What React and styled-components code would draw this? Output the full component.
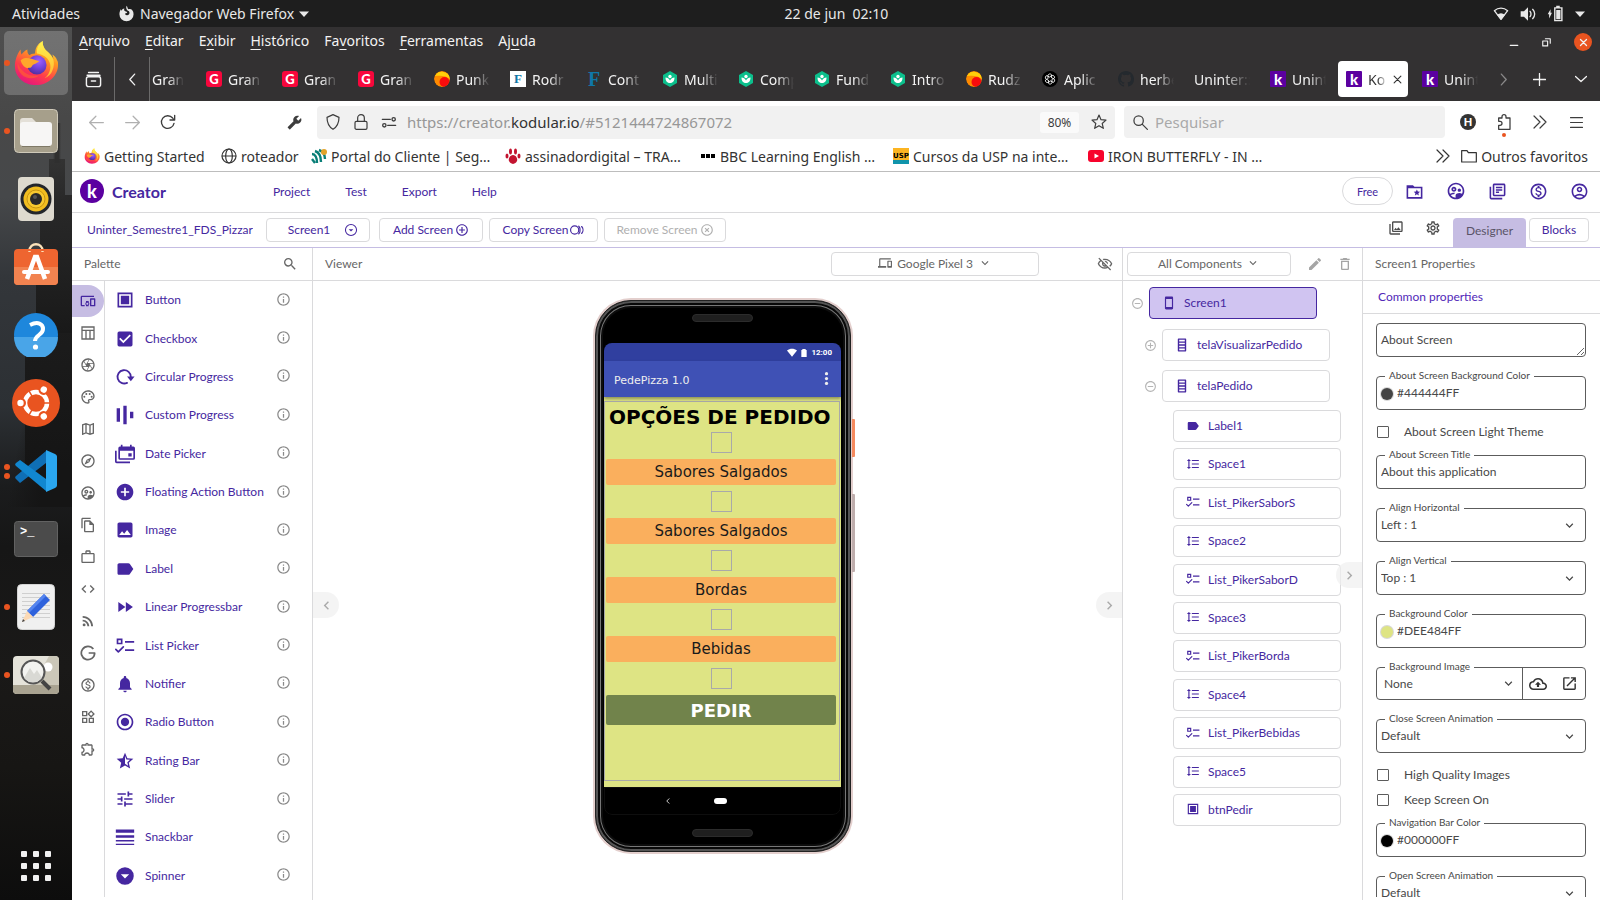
import React from "react";
import styled, { createGlobalStyle } from "styled-components";
import {
  MdAddCircle, MdCheckBox, MdCode, MdDeleteOutline, MdEdit, MdFastForward,
  MdFormatLineSpacing, MdImage, MdInfoOutline, MdLabel, MdNotifications, MdOpenInNew,
  MdOutlineAccountCircle, MdOutlineAddCircleOutline, MdOutlineCamera, MdOutlineCloudUpload,
  MdOutlineDevices, MdOutlineDevicesOther, MdOutlineExplore, MdOutlineExtension,
  MdOutlineFileCopy, MdOutlineLibraryBooks, MdOutlineMap, MdOutlineMonetizationOn,
  MdOutlinePalette, MdOutlineSettings, MdOutlineSupervisedUserCircle, MdOutlineVisibilityOff,
  MdOutlineWidgets, MdOutlinePhotoLibrary, MdRadioButtonChecked, MdRemoveCircleOutline,
  MdRssFeed, MdSearch, MdStarHalf, MdStayCurrentPortrait, MdTune, MdWorkOutline,
  MdExpandMore, MdChevronLeft, MdChevronRight, MdBuild, MdHighlightOff,
} from "react-icons/md";

const ui = `"Noto Sans", "Open Sans", sans-serif`;
const geo = `Lato, "Open Sans", sans-serif`;
const purple = "#4527a0";
const line = "#dadadc";

const Global = createGlobalStyle`
  *, *::before, *::after { box-sizing: border-box; }
  html, body, #root { height: 100%; }
  body { margin: 0; overflow: hidden; background: #fff; font-family: ${ui}; font-size: 14px; }
  button, input, select, textarea { font: inherit; color: inherit; margin: 0; }
  button { background: none; border: 0; padding: 0; cursor: pointer; }
  a { color: inherit; text-decoration: none; }
  svg { display: block; flex: none; }
  ul { list-style: none; margin: 0; padding: 0; }
`;

/* ---------- generic drawing helper ---------- */
const Icon = ({ size = 16, box = 24, children, stroke, w = 2, ...rest }) => (
  <svg
    width={size} height={size} viewBox={`0 0 ${box} ${box}`} aria-hidden="true"
    fill={stroke ? "none" : "currentColor"} stroke={stroke ? "currentColor" : "none"}
    strokeWidth={stroke ? w : undefined} strokeLinecap="round" strokeLinejoin="round" {...rest}
  >
    {children}
  </svg>
);

/* ---------- desktop shell ---------- */
const Desktop = styled.div`
  height: 100%;
  display: flex;
  flex-direction: column;
`;
const TopBar = styled.header`
  height: 27px;
  flex: none;
  display: grid;
  grid-template-columns: 1fr auto 1fr;
  align-items: center;
  padding: 0 15px 0 12px;
  background: #1e1e1e;
  color: #e8e8e8;
`;
const TopGroup = styled.div`
  display: flex;
  align-items: center;
  gap: ${(p) => p.$gap}px;
  justify-content: ${(p) => (p.$end ? "flex-end" : "flex-start")};
`;
const TopButton = styled.button`
  display: flex;
  align-items: center;
  gap: 5px;
  line-height: 27px;
`;
const Clock = styled.time`
  white-space: pre;
  padding-left: 76px;
`;
const Workspace = styled.div`
  flex: 1;
  min-height: 0;
  display: flex;
`;

const Dock = styled.nav`
  width: 72px;
  flex: none;
  display: flex;
  flex-direction: column;
  justify-content: space-between;
  padding: 2px 0 0;
  background:
    linear-gradient(90deg, transparent, #2f2f2f 30%, #2f2f2f 70%, transparent) 53px 96px / 8px 40px no-repeat,
    linear-gradient(#333, #292929) 49px 132px / 16px 40px no-repeat,
    linear-gradient(#292929, #232323) 40px 168px / 32px 60px no-repeat,
    linear-gradient(#232323, #191919) 36px 226px / 36px 80px no-repeat,
    linear-gradient(#1c1c1c, #151515) 25px 300px / 47px 140px no-repeat,
    linear-gradient(100deg, transparent 30%, #151515 65%) 0 360px / 72px 120px no-repeat,
    linear-gradient(180deg, #4f4f4f 0, #484848 90px, #46484a 170px, #33363a 250px, #2c3034 380px, #1b1c1d 460px, #161616 520px, #1a1918 640px, #171614 740px, #0d0d0d 100%);
`;
const DockItem = styled.button`
  position: relative;
  width: 72px;
  height: 68px;
  display: flex;
  align-items: center;
  justify-content: center;
  &::before {
    content: "";
    position: absolute;
    inset: 2px 4px;
    border-radius: 5px;
    background: ${(p) => (p.$active ? "rgba(255,255,255,.2)" : "none")};
  }
  svg { position: relative; }
`;
const Dots = styled.span`
  position: absolute;
  left: 4px;
  top: 0;
  bottom: 0;
  display: flex;
  flex-direction: column;
  justify-content: center;
  gap: 3px;
  i { width: 6px; height: 6px; border-radius: 50%; background: #e95420; }
`;
const AppsGrid = styled.button`
  width: 72px;
  height: 68px;
  display: grid;
  grid-template-columns: repeat(3, 6px);
  grid-auto-rows: 6px;
  gap: 6px;
  place-content: center;
  i { background: #f1f1f1; border-radius: 1px; }
`;

const FirefoxArt = ({ size, id }) => (
  <svg width={size} height={size} viewBox="0 0 48 48" aria-hidden="true">
    <defs>
      <linearGradient id={`${id}a`} x1="0.8" y1="0" x2="0.3" y2="1">
        <stop offset="0" stopColor="#fff44f" /><stop offset=".35" stopColor="#ff9a1f" />
        <stop offset=".7" stopColor="#ff3b4c" /><stop offset="1" stopColor="#e3167e" />
      </linearGradient>
      <radialGradient id={`${id}b`} cx=".6" cy=".3" r=".8">
        <stop offset="0" stopColor="#a060ff" /><stop offset=".5" stopColor="#7040d8" /><stop offset="1" stopColor="#4b2b8f" />
      </radialGradient>
      <linearGradient id={`${id}c`} x1="0" y1="0" x2="0" y2="1">
        <stop offset="0" stopColor="#fff44f" /><stop offset="1" stopColor="#ffb52e" />
      </linearGradient>
    </defs>
    <path fill={`url(#${id}a)`} d="M46 21c-1-3-3-5-5-6 1 2 1 4 1 5C40 14 34 12 32 7c-1-2-1-4-1-6-6 3-8 9-8 13-3 0-5 1-6 2-2-2-2-4-2-6-3 1-5 4-6 5-1-1-1-4-1-5-3 3-6 11-6 17 0 12 10 20 22 20 13 0 23-10 23-21 0-2 0-4-1-5z" />
    <path fill={`url(#${id}c)`} d="M31 1c0 2 0 4 1 6 2 5 8 7 10 13 1 3 1 8-1 12-1 3-4 6-8 8 6-5 8-13 4-19-3-5-8-6-12-7-1-5 2-10 6-13z" />
    <circle cx="25" cy="26" r="10" fill={`url(#${id}b)`} />
    <path fill="#ffa62b" d="M8 21c4-4 11-2 16 0l3 1c0 2-6 3-7 5-1 1-1 2-3 2-4 1-8-3-9-8z" />
    <path fill="#ff5a36" d="M5 24c3 9 12 15 22 13-4 4-13 4-18-1-3-3-5-8-4-12z" opacity=".75" />
  </svg>
);
const FilesArt = () => (
  <svg width="44" height="44" viewBox="0 0 44 44">
    <rect x=".5" y=".5" width="43" height="43" rx="4" fill="#a69f8b" stroke="#cfc9b9" />
    <path fill="#e4e0d8" d="M6 12a3 3 0 0 1 3-3h9l4 4h10v8H6z" />
    <rect x="6" y="13" width="32" height="24" rx="3" fill="#f7f6f5" />
    <path stroke="#7f7966" d="M8 37.500h28" />
  </svg>
);
const SpeakerArt = () => (
  <svg width="36" height="44" viewBox="0 0 36 44">
    <rect width="36" height="44" rx="4" fill="#dedacf" />
    <circle cx="18" cy="22" r="15.500" fill="#23262b" />
    <circle cx="18" cy="22" r="12.500" fill="#f1bd1f" />
    <circle cx="18" cy="22" r="9" fill="#f7c92f" stroke="#c79512" />
    <circle cx="18" cy="22" r="6" fill="#2a2a2a" /><circle cx="17" cy="20" r="2" fill="#555" />
  </svg>
);
const SoftwareArt = () => (
  <svg width="44" height="48" viewBox="0 0 44 48">
    <path fill="none" stroke="#fbe3bb" strokeWidth="2.400" d="M15.500 8c0-9 13-9 13 0" />
    <rect y="6" width="44" height="36" rx="4" fill="#ee6530" />
    <path fill="#f28350" d="M0 24h44v14a4 4 0 0 1-4 4H4a4 4 0 0 1-4-4z" />
    <path fill="none" stroke="#fbe3bb" strokeWidth="2.400" d="M15.500 8v1M28.500 8v1" />
    <path fill="none" stroke="#fff" strokeWidth="4.500" d="M13 36l8-22h2l8 22" />
    <path stroke="#fff" strokeWidth="4" strokeLinecap="round" d="M10 29h24" />
  </svg>
);
const HelpArt = () => (
  <svg width="44" height="44" viewBox="0 0 44 44">
    <circle cx="22" cy="22" r="22" fill="#1e87dc" />
    <path d="M0 24h44a22 22 0 0 1-44 0z" fill="#49a5e8" />
    <path fill="none" stroke="#fff" strokeWidth="4" d="M16 12c8-4 13-1 13 4 0 6-8 6-8 12" />
    <circle cx="21.500" cy="34" r="2.600" fill="#fff" />
  </svg>
);
const UbuntuArt = () => (
  <svg width="48" height="48" viewBox="0 0 48 48">
    <circle cx="24" cy="24" r="24" fill="#e95420" />
    <circle cx="24" cy="24" r="11" fill="none" stroke="#fff" strokeWidth="4.500" />
    {[180, 60, 300].map((a) => (
      <g key={a} transform={`rotate(${a} 24 24)`}>
        <circle cx="39" cy="24" r="5" fill="#e95420" /><circle cx="39.500" cy="24" r="3.200" fill="#fff" />
      </g>
    ))}
    {[0, 120, 240].map((a) => (
      <path key={a} transform={`rotate(${a} 24 24)`} stroke="#e95420" strokeWidth="1.500" d="M32 24h6" />
    ))}
  </svg>
);
const CodeArt = () => (
  <svg width="42" height="42" viewBox="0 0 42 42">
    <path fill="#0f6fb5" d="M31 1v12L5 33l-4-4a2 2 0 0 1 0-3z" />
    <path fill="#1187d0" d="M31 41V29L5 10l-4 3a2 2 0 0 0 0 3z" />
    <path fill="#2aa7f0" d="M31 0l9 4a3 3 0 0 1 2 3v28a3 3 0 0 1-2 3l-9 4z" />
  </svg>
);
const TerminalArt = () => (
  <svg width="44" height="36" viewBox="0 0 44 36">
    <rect x=".5" y=".5" width="43" height="35" rx="3" fill="#4b4b4b" stroke="#626262" />
    <text x="6" y="14" fill="#fff" fontFamily="Liberation Mono, monospace" fontWeight="700" fontSize="12">&gt;_</text>
  </svg>
);
const EditorArt = () => (
  <svg width="38" height="46" viewBox="0 0 38 46">
    <rect x=".5" y=".5" width="37" height="45" rx="4" fill="#f0f0f0" stroke="#d4d4d4" />
    <path stroke="#cfcfcf" d="M5 9.500h28M5 13.500h28M5 17.500h28M5 21.500h28M5 25.500h28M5 29.500h28M5 33.500h28" />
    <path fill="#2f62dc" d="M27 10l6 6-17 17-6-6z" /><path fill="#5585f0" d="M27 10l2 2-17 17-2-2z" />
    <path fill="#fbd9b5" d="M10 27l6 6-11 5z" /><path fill="#444" d="M6 35l2 2-3 1z" />
  </svg>
);
const ViewerArt = () => (
  <svg width="46" height="38" viewBox="0 0 46 38">
    <rect width="46" height="38" rx="4" fill="#e5e3da" />
    <path fill="#cbc7b8" d="M20 29L36 0h6a4 4 0 0 1 4 4v25z" />
    <path fill="#a9a391" d="M0 29h46v5a4 4 0 0 1-4 4H4a4 4 0 0 1-4-4z" />
    <circle cx="35" cy="11" r="4.500" fill="#fff" />
    <path d="M29 25l8 8" stroke="#444" strokeWidth="4" />
    <circle cx="20" cy="16" r="11.500" fill="#f4f4f2" fillOpacity=".9" stroke="#555" strokeWidth="2" />
    <path fill="#d9d9d4" d="M11 22l6-10 4 6 3-4 5 8-5 4h-8z" />
  </svg>
);

/* ---------- browser ---------- */
const Browser = styled.main`
  flex: 1;
  min-width: 0;
  display: flex;
  flex-direction: column;
  background: #fff;
`;
const MenuBar = styled.nav`
  height: 30px;
  flex: none;
  display: flex;
  align-items: center;
  gap: 15px;
  padding: 0 8px 4px 7px;
  background: #333132;
  color: #f3f3f3;
  u { text-underline-offset: 3px; }
`;
const WindowButtons = styled.div`
  margin-left: auto;
  display: flex;
  align-items: center;
  gap: 23px;
  padding-top: 4px;
`;
const CloseWindow = styled.button`
  width: 18px;
  height: 18px;
  border-radius: 50%;
  background: #e95420;
  display: grid;
  place-items: center;
`;
const TabBar = styled.div`
  height: 44px;
  flex: none;
  display: flex;
  align-items: center;
  background: #333132;
  color: #f3f3f3;
`;
const TabTool = styled.button`
  width: ${(p) => p.$w}px;
  height: 44px;
  flex: none;
  display: grid;
  place-items: center;
  opacity: ${(p) => (p.$dim ? 0.45 : 1)};
  border-right: ${(p) => (p.$rule ? "1px solid #6b6a6a" : "0")};
`;
const Strip = styled.div`
  flex: 1;
  min-width: 0;
  display: flex;
  overflow: hidden;
`;
const Tab = styled.button`
  width: ${(p) => (p.$first ? 46 : 76)}px;
  height: 44px;
  flex: none;
  padding: 4px ${(p) => (p.$first ? 12 : 4)}px 4px ${(p) => (p.$first ? 0 : 2)}px;
  text-align: left;
  color: ${(p) => (p.$active ? "#333" : "inherit")};
`;
const TabBody = styled.span`
  height: 36px;
  display: flex;
  align-items: center;
  gap: 6px;
  padding: 0 ${(p) => (p.$first ? 0 : 6)}px;
  padding-left: ${(p) => (p.$first ? 2 : 8)}px;
  border-radius: 4px;
  background: ${(p) => (p.$active ? "#fff" : "none")};
`;
const TabText = styled.span`
  flex: 1;
  min-width: 0;
  overflow: hidden;
  white-space: nowrap;
  line-height: 20px;
  padding-top: 1px;
  mask-image: linear-gradient(90deg, #000 50%, transparent 100%);
`;
const Fav = styled.span`
  width: 16px;
  height: 16px;
  flex: none;
  display: grid;
  place-items: center;
  overflow: hidden;
  border-radius: ${(p) => p.$r || 0}px;
  background: ${(p) => p.$bg || "none"};
  color: ${(p) => p.$fg || "#fff"};
  font: ${(p) => p.$font || `900 13px/16px ${geo}`};
`;

const Toolbar = styled.div`
  height: 42px;
  flex: none;
  display: flex;
  align-items: center;
  padding-right: 6px;
  color: #3d3d3d;
`;
const Tool = styled.button`
  width: 36px;
  height: 36px;
  flex: none;
  display: grid;
  place-items: center;
  position: relative;
  opacity: ${(p) => (p.$dim ? 0.4 : 1)};
`;
const Nav = styled.div`
  display: flex;
  padding-left: 6px;
  width: 204px;
  flex: none;
`;
const Address = styled.div`
  flex: 782 1 0;
  height: 33px;
  margin-left: 5px;
  display: flex;
  align-items: center;
  gap: 12px;
  padding: 0 8px;
  background: #f1f1f1;
  border-radius: 4px;
`;
const Url = styled.a`
  flex: 1;
  margin-left: -2px;
  font-size: 15px;
  color: #979797;
  white-space: nowrap;
  b { font-weight: 400; color: #333; }
`;
const Zoom = styled.button`
  width: 39px;
  height: 21px;
  font-size: 12px;
  background: #fafafa;
  border-radius: 3px;
`;
const SearchBox = styled.label`
  flex: 304 1 0;
  height: 32px;
  margin: 0 5px 0 9px;
  display: flex;
  align-items: center;
  gap: 7px;
  padding: 0 8px 0 9px;
  background: #f1f1f1;
  border-radius: 4px;
  input { flex: 1; min-width: 0; border: 0; background: none; outline: 0; font-size: 15px; padding: 0; }
  input::placeholder { color: #a9a9a9; opacity: 1; }
`;
const Notice = styled.i`
  position: absolute;
  left: 16px;
  bottom: 3px;
  width: 4px;
  height: 4px;
  border-radius: 2px;
  background: #e95420;
`;
const Bookmarks = styled.nav`
  height: 29px;
  flex: none;
  display: flex;
  align-items: center;
  padding: 0 12px 2px;
  border-bottom: 1px solid #bdbdbd;
  color: #333;
`;
const Bookmark = styled.a`
  display: flex;
  align-items: center;
  gap: 4px;
  white-space: nowrap;
  width: ${(p) => (p.$w ? p.$w + "px" : "auto")};
`;
const More = styled.button`
  margin: 0 10px 0 auto;
`;

/* ---------- creator ---------- */
const Creator = styled.section`
  flex: 1;
  min-height: 0;
  display: flex;
  flex-direction: column;
  font-family: ${geo};
  font-size: 12px;
  color: #5f5f5f;
`;
const AppHeader = styled.header`
  height: 41px;
  flex: none;
  display: flex;
  align-items: center;
  padding: 0 11px 2px 8px;
  border-bottom: 1px solid ${line};
  color: ${purple};
`;
const Brand = styled.a`
  width: 193px;
  display: flex;
  align-items: center;
  gap: 8px;
  font-size: 16px;
  font-weight: 700;
`;
const Logo = styled.span`
  width: 24px;
  height: 24px;
  border-radius: 50%;
  background: #5b00a0;
  color: #fff;
  display: grid;
  place-items: center;
  font: 900 18px/22px ${geo};
`;
const AppMenu = styled.nav`
  display: flex;
  gap: 35px;
`;
const AppTools = styled.div`
  margin-left: auto;
  display: flex;
  align-items: center;
  gap: 22px;
`;
const Pill = styled.button`
  width: 51px;
  height: 28px;
  margin-right: -10px;
  border: 1px solid ${line};
  border-radius: 14px;
  font-size: 11px;
`;
const ScreenBar = styled.div`
  height: 35px;
  flex: none;
  display: flex;
  align-items: center;
  padding: 0 11px 0 15px;
  border-bottom: 1px solid #c5bde3;
  color: ${purple};
`;
const ProjectName = styled.a`
  width: 166px;
  margin-right: 13px;
  padding-bottom: 2px;
  overflow: hidden;
  white-space: nowrap;
`;
const OutlineButton = styled.button`
  width: ${(p) => p.$w}px;
  height: 24px;
  flex: none;
  display: flex;
  align-items: center;
  justify-content: center;
  gap: ${(p) => p.$gap || 2}px;
  padding: 0 0 1px;
  border: 1px solid ${line};
  border-radius: 4px;
  background: #fff;
  white-space: nowrap;
  color: ${(p) => (p.disabled ? "#b0b0b0" : "inherit")};
`;
const ScreenButtons = styled.div`
  display: flex;
  gap: 6px;
  & > :first-child { margin-right: 3px; padding-left: 10px; }
`;
const ModeTools = styled.div`
  margin-left: auto;
  align-self: stretch;
  display: flex;
  align-items: center;
  gap: 21px;
  color: #4d4d4d;
  & > button { padding-bottom: 4px; }
`;
const ModeTabs = styled.div`
  align-self: stretch;
  display: flex;
  gap: 3px;
  padding-top: 5px;
  margin-left: -9px;
  color: ${purple};
`;
const DesignerTab = styled.button`
  width: 73px;
  background: #c6bde3;
  border-radius: 4px 4px 0 0;
  color: #5a5468;
  padding-bottom: 4px;
`;

const Panels = styled.div`
  flex: 1;
  min-height: 0;
  display: flex;
`;
const Panel = styled.section`
  position: relative;
  width: ${(p) => p.$w}px;
  flex: none;
  display: flex;
  flex-direction: column;
  min-height: 0;
  overflow: hidden;
  border-right: ${(p) => (p.$last ? 0 : `1px solid ${line}`)};
`;
const Viewer = styled(Panel)`
  flex: 1;
  width: auto;
`;
const PanelHead = styled.header`
  height: 33px;
  flex: none;
  display: flex;
  align-items: center;
  justify-content: space-between;
  padding: 0 ${(p) => p.$right || 14}px 1px ${(p) => p.$left || 12}px;
  border-bottom: 1px solid ${line};
  color: #666;
`;
const PaletteBody = styled.div`
  flex: 1;
  min-height: 0;
  display: flex;
  padding-bottom: 3px;
`;
const Categories = styled.nav`
  width: 33px;
  padding-top: 4px;
  border-right: 1px solid ${line};
  display: flex;
  flex-direction: column;
`;
const Category = styled.button`
  width: 32px;
  height: 32px;
  display: grid;
  place-items: center;
  color: ${(p) => (p.$active ? purple : "#666")};
  background: ${(p) => (p.$active ? "#c6bde3" : "none")};
  border-radius: 0 16px 16px 0;
`;
const PaletteList = styled.ul`
  flex: 1;
  display: flex;
  flex-direction: column;
  padding-bottom: 2px;
`;
const PaletteRow = styled.li`
  flex: 1 0 36px;
  display: flex;
  align-items: center;
  gap: 10px;
  padding: 0 21px 0 10px;
  color: ${purple};
  span { flex: 1; white-space: nowrap; padding-bottom: 1px; }
  button { color: #8a8a8a; padding-bottom: 2px; }
`;
const Handle = styled.button`
  position: absolute;
  top: ${(p) => p.$top}px;
  ${(p) => (p.$left ? "left: 0; border-radius: 0 13px 13px 0;" : "right: 0; border-radius: 13px 0 0 13px;")}
  width: 26px;
  height: 26px;
  display: grid;
  place-items: center;
  background: rgba(240, 240, 240, 0.7);
  color: #aaa;
`;
const DeviceRow = styled.div`
  flex: 1;
  display: flex;
  align-items: center;
  justify-content: flex-end;
  gap: 58px;
`;
const TreeTools = styled.div`
  display: flex;
  gap: 14px;
  color: #a5a5a5;
`;

/* ---------- phone preview ---------- */
const Stage = styled.div`
  flex: 1;
  min-height: 0;
  display: flex;
  justify-content: center;
  align-items: flex-start;
  padding: 17px 0 0 11px;
`;
const PhoneBody = styled.div`
  position: relative;
  width: 260px;
  flex: none;
  padding: 2px;
  border-radius: 38px;
  background: #e3cfcd;
`;
const PhoneFrame = styled.div`
  border-radius: 36px;
  padding: 0 9px 0 8px;
  background: #000;
  border: 1px solid #222;
  box-shadow: inset 0 0 0 2px #555, inset 0 0 0 4px #080808, inset 0 0 0 5px #777, inset 0 0 0 7px #0c0c0c;
`;
const SideKey = styled.i`
  position: absolute;
  right: -2px;
  top: ${(p) => p.$top}px;
  width: 3px;
  height: ${(p) => p.$h}px;
  background: ${(p) => p.$bg};
  border-radius: 0 1px 1px 0;
`;
const Bezel = styled.div`
  height: ${(p) => p.$h}px;
  padding-top: ${(p) => p.$pad}px;
  &::before {
    content: "";
    display: block;
    width: 61px;
    height: 8px;
    margin: 0 auto;
    border-radius: 4px;
    background: #1f1f1f;
    border: 1px solid #2c2c2c;
  }
`;
const PhoneScreen = styled.div`
  overflow: hidden;
  border-radius: 8px;
  font-family: "DejaVu Sans", sans-serif;
`;
const StatusBar = styled.div`
  height: 18px;
  display: flex;
  align-items: center;
  justify-content: flex-end;
  gap: 3px;
  padding: 2px 9px 0 0;
  background: #303f9f;
  color: #fff;
  font: 700 8px/16px Roboto, sans-serif;
`;
const ActionBar = styled.div`
  height: 36px;
  display: flex;
  align-items: center;
  justify-content: space-between;
  padding: 2px 8px 0 10px;
  background: #3f51b5;
  color: #eee;
  font-size: 11px;
  box-shadow: 0 2px 3px rgba(0, 0, 0, 0.35);
  position: relative;
  svg { margin-bottom: 4px; }
`;
const AppCanvas = styled.div`
  height: 390px;
  padding: 4px 1px 6px 0;
  background: #dee484;
`;
const Arrangement = styled.div`
  height: 100%;
  display: flex;
  flex-direction: column;
  align-items: stretch;
  gap: 6px;
  padding: 3px 3px 0 1px;
  border: 1px solid #a9a9a9;
`;
const AppTitle = styled.h1`
  margin: 0 0 -4px;
  padding-left: 3px;
  height: 25px;
  font-size: 20px;
  line-height: 24px;
  font-weight: 700;
  color: #000;
  white-space: nowrap;
`;
const SpaceBox = styled.i`
  width: 21px;
  height: 21px;
  align-self: center;
  border: 1px solid #a9a9a9;
`;
const PickerButton = styled.button`
  height: ${(p) => (p.$main ? 30 : 26)}px;
  border-radius: 2px;
  background: ${(p) => (p.$main ? "#71834b" : "#faaf5d")};
  color: ${(p) => (p.$main ? "#fff" : "#1b1b1b")};
  font-size: ${(p) => (p.$main ? 18 : 15)}px;
  font-weight: ${(p) => (p.$main ? 700 : 400)};
`;
const SoftKeys = styled.div`
  height: 28px;
  display: grid;
  grid-template-columns: 1fr 13px 1fr;
  align-items: center;
  padding-right: 4px;
  background: #000;
  border: 1px solid #0e0e0e;
  border-radius: 0 0 8px 8px;
  color: #ccc;
  svg { justify-self: end; margin-right: 43px; }
  i { height: 6px; border-radius: 3px; background: #fff; }
`;

/* ---------- component tree ---------- */
const Tree = styled.div`
  display: flex;
  flex-direction: column;
  padding: 6px 0 0 8px;
  color: ${purple};
`;
const Branch = styled.div`
  display: flex;
  align-items: center;
  gap: 5px;
  padding-left: ${(p) => p.$indent}px;
  margin-bottom: ${(p) => p.$after}px;
  & > button:first-child { color: #b5b5b5; }
`;
const Node = styled.button`
  width: 168px;
  height: 32px;
  display: flex;
  align-items: center;
  gap: 8px;
  padding: 0 0 1px 12px;
  border: 1px solid ${(p) => (p.$selected ? purple : line)};
  border-radius: 4px;
  background: ${(p) => (p.$selected ? "#d0c4f1" : "#fff")};
`;
const Leaves = styled.div`
  min-height: 416px;
  display: flex;
  flex-direction: column;
  justify-content: space-between;
  padding-left: 42px;
`;

/* ---------- properties ---------- */
const Section = styled.h2`
  margin: 0;
  height: 33px;
  flex: none;
  padding: 0 15px;
  font-size: 12px;
  line-height: 32px;
  font-weight: 400;
  color: #5128b8;
  border-bottom: 1px solid ${line};
`;
const Form = styled.form`
  flex: 1;
  min-height: 0;
  overflow: hidden;
  display: flex;
  flex-direction: column;
  padding: 9px 14px 0 13px;
  margin-bottom: 3px;
  color: #484848;
`;
const FieldBox = styled.div`
  position: relative;
  height: ${(p) => (p.$short ? 33 : 34)}px;
  flex: none;
  display: flex;
  align-items: center;
  border: 1px solid #5c5c5c;
  border-radius: 4px;
  & + & { margin-top: 19px; }
  input, select {
    flex: 1;
    min-width: 0;
    height: 100%;
    border: 0;
    outline: 0;
    background: none;
    appearance: none;
    padding: 0 4px 1px ${(p) => (p.$short ? 7 : 4)}px;
    text-overflow: clip;
  }
  select + svg { margin-left: -${(p) => (p.$short ? 22 : 24)}px; margin-right: ${(p) => (p.$short ? 6 : 8)}px; pointer-events: none; }
`;
const FieldLabel = styled.label`
  position: absolute;
  left: 8px;
  top: -9px;
  padding: 0 4px;
  background: #fff;
  font-size: 10px;
  line-height: 14px;
  white-space: nowrap;
`;
const Area = styled.textarea`
  height: 34px;
  flex: none;
  padding: 7px 4px;
  line-height: 17px;
  border: 1px solid #5c5c5c;
  border-radius: 4px;
  outline: 0;
  resize: vertical;
  overflow: hidden;
  margin-bottom: 19px;
`;
const Swatch = styled.i`
  width: 12px;
  height: 12px;
  margin: 2px 0 0 4px;
  flex: none;
  border-radius: 50%;
  background: ${(p) => p.$c};
  box-shadow: 0 0 0 1px #d8d8d8;
`;
const FileTools = styled.div`
  height: 100%;
  width: 63px;
  display: flex;
  align-items: center;
  justify-content: space-between;
  padding: 0 7px 0 6px;
  border-left: 1px solid #5c5c5c;
  color: #333;
`;
const Checks = styled.div`
  flex: none;
  padding: 9px 0 11px;
`;
const Check = styled.label`
  height: 25px;
  display: flex;
  align-items: center;
  gap: 15px;
  padding-left: 1px;
  input {
    appearance: none;
    width: 12px;
    height: 12px;
    border: 1px solid #5c5c5c;
    border-radius: 1px;
    background: #fff;
  }
`;

/* ---------- icons drawn for the palette ---------- */
const ButtonIcon = ({ size }) => (
  <Icon size={size}><path fillRule="evenodd" d="M3 3h18v18H3zM5 5v14h14V5zM7 7h10v10H7z" /></Icon>
);
const RotateIcon = ({ size }) => (
  <Icon size={size}>
    <path fill="none" stroke="currentColor" strokeWidth="2.200" d="M14.500 19A8 8 0 1 1 19 12v1" /><path d="M14.500 11.500h9L19 17z" />
  </Icon>
);
const BarsIcon = ({ size }) => <Icon size={size}><path d="M2 4h4v16H2zM10 1h4v22h-4zM18 8h4v8h-4z" /></Icon>;
const CalendarIcon = ({ size }) => (
  <Icon size={size}>
    <path d="M0 8h2v13h16v2H2a2 2 0 0 1-2-2z" />
    <path fillRule="evenodd" d="M7 1h2v2h9V1h2v2h2a2 2 0 0 1 2 2v12a2 2 0 0 1-2 2H6a2 2 0 0 1-2-2V5a2 2 0 0 1 2-2h1zM6 8v9h16V8zM16 11h4v4h-4z" />
  </Icon>
);
const ListIcon = ({ size }) => (
  <Icon size={size}>
    <path fillRule="evenodd" d="M2 3h7v7H2zM4 5v3h3V5zM12 6h11v2H12zM12 16h11v2H12z" />
    <path fill="none" stroke="currentColor" strokeWidth="2" d="M1 16l3 3 6-6" />
  </Icon>
);
const SnackIcon = ({ size }) => (
  <Icon size={size}><path d="M1 3h22v4H1zM1 10h22v3H1zM1 15.500h22v2H1zM1 20h22v1.500H1z" /></Icon>
);
const SpinnerIcon = ({ size }) => (
  <Icon size={size}><path fillRule="evenodd" d="M12 1.500a10.500 10.500 0 1 0 0 21 10.500 10.500 0 0 0 0-21zM7 10h10l-5 5z" /></Icon>
);
const TableIcon = ({ size }) => (
  <Icon size={size} stroke><path d="M3 3h18v18H3zM3 8h18M9 8v13M15 8v13" strokeLinejoin="miter" /></Icon>
);
const GoogleIcon = ({ size }) => (
  <Icon size={size} stroke w={2.600}><path strokeLinecap="butt" d="M20 6a10 10 0 1 0 2 6h-9" /></Icon>
);
const ColumnIcon = ({ size }) => (
  <Icon size={size} stroke w={2.400}><path d="M6 2h12v20H6zM6 7h12M6 12h12M6 17h12" /></Icon>
);
const CircleCaret = () => (
  <Icon size={14} stroke w={1.800}><circle cx="12" cy="12" r="9.500" /><path fill="currentColor" stroke="none" d="M8 10.500h8l-4 4z" /></Icon>
);
const CopyIcon = () => (
  <Icon size={14} stroke w={2}><circle cx="8" cy="12" r="7" /><path d="M15 5.500a7 7 0 0 1 2 6.500 7 7 0 0 1-2 6.500M20 6a9 9 0 0 1 0 12" /></Icon>
);
const FolderStar = () => (
  <Icon size={19}>
    <path fillRule="evenodd" d="M2 4h8l2 2h10v15H2zM4 8v11h16V8z" />
    <path d="M15 9.500l1.200 2.600 2.800.3-2.100 1.900.6 2.700-2.500-1.400-2.500 1.400.6-2.700-2.100-1.900 2.800-.3z" />
  </Icon>
);

const categories = [
  ["Interface", MdOutlineDevicesOther], ["Layout", TableIcon], ["Media", MdOutlineCamera],
  ["Drawing", MdOutlinePalette], ["Maps", MdOutlineMap], ["Sensors", MdOutlineExplore],
  ["Social", MdOutlineSupervisedUserCircle], ["Storage", MdOutlineFileCopy], ["Utilities", MdWorkOutline],
  ["Dynamic", MdCode], ["Connectivity", MdRssFeed], ["Google", GoogleIcon],
  ["Monetization", MdOutlineMonetizationOn], ["Apps", MdOutlineWidgets], ["Extension", MdOutlineExtension],
];
const palette = [
  ["Button", ButtonIcon], ["Checkbox", MdCheckBox], ["Circular Progress", RotateIcon],
  ["Custom Progress", BarsIcon], ["Date Picker", CalendarIcon], ["Floating Action Button", MdAddCircle],
  ["Image", MdImage], ["Label", MdLabel], ["Linear Progressbar", MdFastForward], ["List Picker", ListIcon],
  ["Notifier", MdNotifications], ["Radio Button", MdRadioButtonChecked], ["Rating Bar", MdStarHalf],
  ["Slider", MdTune], ["Snackbar", SnackIcon], ["Spinner", SpinnerIcon],
];
const leaves = [
  ["Label1", MdLabel], ["Space1", MdFormatLineSpacing], ["List_PikerSaborS", ListIcon],
  ["Space2", MdFormatLineSpacing], ["List_PikerSaborD", ListIcon], ["Space3", MdFormatLineSpacing],
  ["List_PikerBorda", ListIcon], ["Space4", MdFormatLineSpacing], ["List_PikerBebidas", ListIcon],
  ["Space5", MdFormatLineSpacing], ["btnPedir", ButtonIcon],
];
const dock = [
  ["Firefox", <FirefoxArt size={46} id="dock" />, 1, true], ["Arquivos", <FilesArt />, 1], ["Rhythmbox", <SpeakerArt />, 0],
  ["Ubuntu Software", <SoftwareArt />, 0], ["Ajuda", <HelpArt />, 0], ["Ubuntu", <UbuntuArt />, 0],
  ["Visual Studio Code", <CodeArt />, 2], ["Terminal", <TerminalArt />, 0], ["Editor de texto", <EditorArt />, 1],
  ["Visualizador de imagens", <ViewerArt />, 1],
];

const GFav = <Fav $bg="#f8073c" $r={3}>G</Fav>;
const SunFav = (
  <Fav $r={8}>
    <svg width="16" height="16" viewBox="0 0 16 16"><circle cx="8" cy="8" r="8" fill="#ff8a00" /><path fill="#ffcf0a" d="M1 5a8 8 0 0 1 15 3c-3-3-9-4-15-3z" /><circle cx="10.500" cy="11" r="5" fill="#f80c0c" /></svg>
  </Fav>
);
const HexFav = (
  <Fav>
    <svg width="16" height="16" viewBox="0 0 16 16">
      <path fill="#0cbf8c" d="M8 0l7 4v8l-7 4-7-4V4z" />
      <path fill="#fff" d="M3.500 6.500c2 0 3.500 1 4.500 3 1-2 2.500-3 4.500-3 0 4-2 5.500-4.500 5.500S3.500 10.500 3.500 6.500z" /><circle cx="8" cy="5.500" r="1.700" fill="#fff" />
    </svg>
  </Fav>
);
const AiFav = (
  <Fav $bg="#000" $r={8}>
    <Icon size={12} stroke w={1.600}>
      {[0, 60, 120, 180, 240, 300].map((a) => <path key={a} transform={`rotate(${a} 12 12)`} d="M12 7.500l4-2.500a4 4 0 0 1 5 5l-5 3" />)}
    </Icon>
  </Fav>
);
const GitFav = (
  <Fav $fg="#24292e">
    <Icon size={16} box={16}>
      <path d="M8 0C3.580 0 0 3.580 0 8c0 3.540 2.290 6.530 5.470 7.590.4.070.55-.17.55-.38v-1.490c-2.010.37-2.530-.49-2.690-.94-.09-.23-.48-.94-.82-1.130-.28-.15-.68-.52-.01-.53.63-.01 1.080.58 1.230.82.72 1.210 1.870.87 2.330.66.07-.52.28-.87.51-1.070-1.780-.2-3.640-.89-3.640-3.950 0-.87.31-1.590.82-2.150-.08-.2-.36-1.020.08-2.120 0 0 .67-.21 2.200.82a7.600 7.600 0 0 1 4 0c1.530-1.040 2.200-.82 2.200-.82.44 1.100.16 1.920.08 2.120.51.56.82 1.270.82 2.150 0 3.070-1.870 3.750-3.650 3.950.29.25.54.73.54 1.480v2.190c0 .21.15.46.55.38A8 8 0 0 0 16 8c0-4.420-3.580-8-8-8z" />
    </Icon>
  </Fav>
);
const KFav = <Fav $bg="#5b00a0" $r={1} $font={`900 15px/15px ${geo}`}>k</Fav>;
const tabs = [
  ["Gran", null], ["Gran", GFav], ["Gran", GFav], ["Gran", GFav], ["Punk", SunFav],
  ["Rodr", <Fav $bg="#fff" $fg="#0f77a8" $font={`700 13px/16px "Liberation Serif", serif`}>F</Fav>],
  ["Cont", <Fav $fg="#0f77a8" $font={`700 20px/16px "Liberation Serif", serif`}>F</Fav>],
  ["Multi", HexFav], ["Comp", HexFav], ["Fund", HexFav], ["Intro", HexFav], ["Rudz", SunFav],
  ["Aplic", AiFav], ["herbe", GitFav], ["Uninter::", null], ["Unint", KFav], ["Ko", KFav, true], ["Unint", KFav],
];
const menus = [["", "A", "rquivo"], ["", "E", "ditar"], ["E", "x", "ibir"], ["", "H", "istórico"], ["Fa", "v", "oritos"], ["", "F", "erramentas"], ["Aj", "u", "da"]];

const bookmarks = [
  ["Getting Started", 137, <Fav><FirefoxArt size={16} id="bm" /></Fav>],
  ["roteador", 90, <Fav $fg="#333"><Icon size={16} stroke w={1.800}><circle cx="12" cy="12" r="10.500" /><ellipse cx="12" cy="12" rx="5" ry="10.500" /><path d="M2 12h20" /></Icon></Fav>],
  ["Portal do Cliente | Seg…", 194, (
    <Fav><svg width="16" height="16" viewBox="0 0 16 16"><path stroke="#0a7f78" strokeWidth="2.400" fill="none" d="M1 6c3 0 5 3 5 9M4 3c3 1 6 4 6 11M8 2c3 1 6 4 6 9M1 11l3 4" /><circle cx="13" cy="4" r="3" fill="#e2a32a" /></svg></Fav>
  )],
  ["assinadordigital – TRA…", 195, (
    <Fav $fg="#c31430"><svg width="16" height="16" viewBox="0 0 16 16" fill="currentColor"><ellipse cx="5.500" cy="3.500" rx="1.500" ry="3" /><ellipse cx="10.500" cy="3.500" rx="1.500" ry="3" /><ellipse cx="2" cy="8" rx="1.500" ry="2.500" /><ellipse cx="14" cy="8" rx="1.500" ry="2.500" /><path d="M8 7c3 0 5 4 4 6s-2 2-4 3c-2-1-3-1-4-3s1-6 4-6z" /></svg></Fav>
  )],
  ["BBC Learning English …", 193, (
    <Fav $fg="#000"><svg width="16" height="16" viewBox="0 0 16 16"><path d="M1 6h4v4H1zM6 6h4v4H6zM11 6h4v4h-4z" /></svg></Fav>
  )],
  ["Cursos da USP na inte…", 195, (
    <Fav $bg="linear-gradient(#fcb421 75%, #1094ab 75%)" $fg="#000" $font={`700 7px/13px "DejaVu Sans", sans-serif`}>USP</Fav>
  )],
  ["IRON BUTTERFLY - IN …", 0, (
    <Fav><svg width="16" height="16" viewBox="0 0 16 16"><rect y="2" width="16" height="12" rx="3" fill="#f7032c" /><path fill="#fff" d="M6.500 5.500v5L11 8z" /></svg></Fav>
  )],
];

const Field = ({ id, label, children, short }) => (
  <FieldBox $short={short}>
    <FieldLabel htmlFor={id}>{label}</FieldLabel>
    {children}
  </FieldBox>
);
const SelectField = ({ id, label, value }) => (
  <Field id={id} label={label}>
    <select id={id} defaultValue={value}><option>{value}</option></select>
    <MdExpandMore size={15} />
  </Field>
);
const ColorField = ({ id, label, value }) => (
  <Field id={id} label={label}>
    <Swatch $c={value} />
    <input id={id} defaultValue={value} />
  </Field>
);
const Chevrons = () => <Icon size={16} stroke w={1.800}><path d="M3 3l9 9-9 9M12 3l9 9-9 9" /></Icon>;

export default function App() {
  return (
    <Desktop>
      <Global />
      <TopBar>
        <TopGroup $gap={38}>
          <TopButton>Atividades</TopButton>
          <TopButton>
            <Icon size={17}>
              <path d="M12 1c2 2 1 4 3 5 4-1 7 2 7 7a10 10 0 1 1-20 0c0-3 1-5 2-7l1 2c1-2 2-3 4-3-1 2 0 4 2 4l2 1c0 1-1 2-3 2 0 2 2 3 4 2 3-1 3-5 0-6-2-1-3-4-2-7z" />
            </Icon>
            Navegador Web Firefox
            <Icon size={10}><path d="M0 6h24L12 19z" /></Icon>
          </TopButton>
        </TopGroup>
        <Clock>22 de jun  02:10</Clock>
        <TopGroup $gap={11} $end>
          <Icon size={16}><path fill="none" stroke="currentColor" strokeWidth="2" d="M2 7c6-5 14-5 20 0L12 20z" /><path d="M6 13c4-3 8-3 12 0l-6 8z" /></Icon>
          <Icon size={16}><path d="M1 8h5l6-6v20l-6-6H1z" /><path fill="none" stroke="currentColor" strokeWidth="2" d="M15 8c2 2 2 6 0 8M19 5c4 4 4 10 0 14" /></Icon>
          <Icon size={17}><path d="M5 6L1 13h2v6l4-8H5z" /><path fillRule="evenodd" d="M10 3h3V1h5v2h4v20H10zM12 5v16h8V5zM13 7h6v13h-6z" /></Icon>
          <Icon size={10}><path d="M0 6h24L12 19z" /></Icon>
        </TopGroup>
      </TopBar>

      <Workspace>
        <Dock aria-label="Dock">
          <div>
            {dock.map(([name, art, dots, active]) => (
              <DockItem key={name} aria-label={name} $active={active}>
                {dots > 0 && <Dots>{Array.from({ length: dots }, (_, i) => <i key={i} />)}</Dots>}
                {art}
              </DockItem>
            ))}
          </div>
          <AppsGrid aria-label="Aplicativos">
            {Array.from({ length: 9 }, (_, i) => <i key={i} />)}
          </AppsGrid>
        </Dock>

        <Browser>
          <MenuBar>
            {menus.map(([a, u, b]) => <button key={u + b}>{a}<u>{u}</u>{b}</button>)}
            <WindowButtons>
              <button aria-label="Minimizar"><Icon size={10} stroke w={3}><path d="M3 20h18" /></Icon></button>
              <button aria-label="Restaurar"><Icon size={9} stroke w={3}><path d="M2 8h13v13H2zM9 2h13v12" /></Icon></button>
              <CloseWindow aria-label="Fechar"><Icon size={9} stroke w={3.500}><path d="M4 4l16 16M20 4L4 20" /></Icon></CloseWindow>
            </WindowButtons>
          </MenuBar>
          <TabBar>
            <TabTool $w={43} $rule aria-label="Firefox View"><Icon size={17} stroke w={2}><path d="M5 2h14M3 6h18v1M2 11a3 3 0 0 1 3-3h14a3 3 0 0 1 3 3v8a3 3 0 0 1-3 3H5a3 3 0 0 1-3-3zM9 14h6" /></Icon></TabTool>
            <TabTool $w={35} $rule aria-label="Anterior"><Icon size={13} stroke w={2.400}><path d="M16 2L7 12l9 10" /></Icon></TabTool>
            <Strip>
              {tabs.map(([text, fav, active], i) => (
                <Tab key={i} $first={i === 0} $active={active}>
                  <TabBody $first={i === 0} $active={active}>
                    {fav}
                    <TabText>{text}</TabText>
                    {active && <Icon size={9} stroke w={3}><path d="M3 3l18 18M21 3L3 21" /></Icon>}
                  </TabBody>
                </Tab>
              ))}
            </Strip>
            <TabTool $w={28} $dim aria-label="Próxima"><Icon size={13} stroke w={2.400}><path d="M8 2l9 10-9 10" /></Icon></TabTool>
            <TabTool $w={44} aria-label="Nova aba"><Icon size={13} stroke w={2.400}><path d="M12 1v22M1 12h22" /></Icon></TabTool>
            <TabTool $w={39} aria-label="Listar abas"><Icon size={12} stroke w={2.600}><path d="M1 7l11 10L23 7" /></Icon></TabTool>
          </TabBar>
          <Toolbar>
            <Nav>
              <Tool $dim aria-label="Voltar"><Icon size={15} stroke w={2}><path d="M23 12H2M11 2L1 12l10 10" /></Icon></Tool>
              <Tool $dim aria-label="Avançar"><Icon size={15} stroke w={2}><path d="M1 12h21M13 2l10 10-10 10" /></Icon></Tool>
              <Tool aria-label="Recarregar"><Icon size={16} stroke w={2}><path d="M21 14a9.500 9.500 0 1 1-2-8l2 3M22 2v7h-7" /></Icon></Tool>
            </Nav>
            <Tool aria-label="Ferramentas"><MdBuild size={15} transform="scale(-1 1)" /></Tool>
            <Address>
              <Icon size={16} stroke w={1.800}><path d="M12 1l9 4c0 9-2 14-9 18C5 19 3 14 3 5z" /></Icon>
              <Icon size={16} stroke w={1.800}><rect x="3" y="11" width="18" height="12" rx="2" /><path d="M7 11V6a5 5 0 0 1 10 0v5" /></Icon>
              <Icon size={16} stroke w={2}><path d="M2 8h12M10 17h12" /><circle cx="19" cy="8" r="2.500" /><circle cx="5" cy="17" r="2.500" /></Icon>
              <Url href="#project">https://creator.<b>kodular.io</b>/#5121444724867072</Url>
              <Zoom>80%</Zoom>
              <Icon size={16} stroke w={1.800}><path d="M12 1.500l3 7 7.500.7-5.700 5 1.700 7.300L12 17.500l-6.500 4 1.700-7.300-5.700-5 7.500-.7z" /></Icon>
            </Address>
            <SearchBox>
              <Icon size={15} stroke w={2}><circle cx="9" cy="9" r="7.500" /><path d="M15 15l8 8" /></Icon>
              <input placeholder="Pesquisar" aria-label="Pesquisar" />
            </SearchBox>
            <Tool aria-label="Extensão H"><Fav $bg="#333" $r={8} $font={`900 11px/16px ${geo}`}>H</Fav></Tool>
            <Tool aria-label="Extensões"><Icon size={16} stroke w={1.900}><path d="M4 10V6h5V4a3 3 0 0 1 6 0v2h6v17H4v-6h2a3 3 0 0 0 0-6H4" /></Icon><Notice /></Tool>
            <Tool aria-label="Mais"><Chevrons /></Tool>
            <Tool aria-label="Menu"><Icon size={13} stroke w={2.200}><path d="M1 3h22M1 12h22M1 21h22" /></Icon></Tool>
          </Toolbar>
          <Bookmarks>
            {bookmarks.map(([text, w, icon]) => <Bookmark key={text} href="#b" $w={w}>{icon}{text}</Bookmark>)}
            <More aria-label="Mais favoritos"><Chevrons /></More>
            <Bookmark href="#outros"><Icon size={16} stroke w={1.800}><path d="M1 4h8l2 3h12v14H1z" /></Icon>Outros favoritos</Bookmark>
          </Bookmarks>

          <Creator>
            <AppHeader>
              <Brand href="#home"><Logo>k</Logo>Creator</Brand>
              <AppMenu>
                {["Project", "Test", "Export", "Help"].map((t) => <button key={t}>{t}</button>)}
              </AppMenu>
              <AppTools>
                <Pill>Free</Pill>
                <button aria-label="Projetos"><FolderStar /></button>
                <button aria-label="Comunidade"><MdOutlineSupervisedUserCircle size={20} /></button>
                <button aria-label="Documentos"><MdOutlineLibraryBooks size={19} /></button>
                <button aria-label="Monetização"><MdOutlineMonetizationOn size={19} /></button>
                <button aria-label="Conta"><MdOutlineAccountCircle size={19} /></button>
              </AppTools>
            </AppHeader>
            <ScreenBar>
              <ProjectName href="#project">Uninter_Semestre1_FDS_Pizzar</ProjectName>
              <ScreenButtons>
                <OutlineButton $w={104} $gap={14}>Screen1 <CircleCaret /></OutlineButton>
                <OutlineButton $w={104}>Add Screen <MdOutlineAddCircleOutline size={14} /></OutlineButton>
                <OutlineButton $w={109}>Copy Screen <CopyIcon /></OutlineButton>
                <OutlineButton $w={122} disabled>Remove Screen <MdHighlightOff size={14} /></OutlineButton>
              </ScreenButtons>
              <ModeTools>
                <button aria-label="Recursos"><MdOutlinePhotoLibrary size={16} /></button>
                <button aria-label="Configurações"><MdOutlineSettings size={16} /></button>
                <ModeTabs>
                  <DesignerTab>Designer</DesignerTab>
                  <OutlineButton $w={60}>Blocks</OutlineButton>
                </ModeTabs>
              </ModeTools>
            </ScreenBar>

            <Panels>
              <Panel $w={241}>
                <PanelHead>Palette<MdSearch size={16} /></PanelHead>
                <PaletteBody>
                  <Categories>
                    {categories.map(([name, I], i) => (
                      <Category key={name} aria-label={name} $active={i === 0}><I size={16} /></Category>
                    ))}
                  </Categories>
                  <PaletteList>
                    {palette.map(([name, I]) => (
                      <PaletteRow key={name}>
                        <I size={20} /><span>{name}</span>
                        <button aria-label={`Sobre ${name}`}><MdInfoOutline size={15} /></button>
                      </PaletteRow>
                    ))}
                  </PaletteList>
                </PaletteBody>
              </Panel>

              <Viewer>
                <PanelHead $right={9}>
                  Viewer
                  <DeviceRow>
                    <OutlineButton $w={208} $gap={5}><MdOutlineDevices size={14} />Google Pixel 3<MdExpandMore size={14} /></OutlineButton>
                    <button aria-label="Ocultos"><MdOutlineVisibilityOff size={16} /></button>
                  </DeviceRow>
                </PanelHead>
                <Handle $left $top={344} aria-label="Recolher paleta"><MdChevronLeft size={17} /></Handle>
                <Handle $top={344} aria-label="Recolher componentes"><MdChevronRight size={17} /></Handle>
                <Stage>
                  <PhoneBody>
                    <SideKey $top={121} $h={38} $bg="#f58a5e" />
                    <SideKey $top={196} $h={78} $bg="#bfaead" />
                    <PhoneFrame>
                      <Bezel $h={42} $pad={13} />
                      <PhoneScreen>
                        <StatusBar>
                          <Icon size={10}><path d="M0 6C7 0 17 0 24 6L12 21z" /></Icon>
                          <Icon size={8}><path d="M7 0h10v3h3v21H4V3h3z" /></Icon>
                          12:00
                        </StatusBar>
                        <ActionBar>PedePizza 1.0<Icon size={13}><circle cx="12" cy="3" r="3" /><circle cx="12" cy="12" r="3" /><circle cx="12" cy="21" r="3" /></Icon></ActionBar>
                        <AppCanvas>
                          <Arrangement>
                            <AppTitle>OPÇÕES DE PEDIDO</AppTitle>
                            {["Sabores Salgados", "Sabores Salgados ", "Bordas", "Bebidas"].map((t) => (
                              <React.Fragment key={t}><SpaceBox /><PickerButton>{t}</PickerButton></React.Fragment>
                            ))}
                            <SpaceBox />
                            <PickerButton $main>PEDIR</PickerButton>
                          </Arrangement>
                        </AppCanvas>
                        <SoftKeys>
                          <Icon size={6} stroke w={4}><path d="M16 3l-9 9 9 9" /></Icon><i />
                        </SoftKeys>
                      </PhoneScreen>
                      <Bezel $h={36} $pad={14} />
                    </PhoneFrame>
                  </PhoneBody>
                </Stage>
              </Viewer>

              <Panel $w={240}>
                <PanelHead $left={4} $right={9}>
                  <OutlineButton $w={164} $gap={4}>All Components<MdExpandMore size={14} /></OutlineButton>
                  <TreeTools>
                    <button aria-label="Renomear"><MdEdit size={16} /></button>
                    <button aria-label="Excluir"><MdDeleteOutline size={16} /></button>
                  </TreeTools>
                </PanelHead>
                <Tree>
                  <Branch $indent={0} $after={10}>
                    <button aria-label="Recolher"><MdRemoveCircleOutline size={13} /></button>
                    <Node $selected><MdStayCurrentPortrait size={14} />Screen1</Node>
                  </Branch>
                  <Branch $indent={13} $after={9}>
                    <button aria-label="Expandir"><MdOutlineAddCircleOutline size={13} /></button>
                    <Node><ColumnIcon size={14} />telaVisualizarPedido</Node>
                  </Branch>
                  <Branch $indent={13} $after={8}>
                    <button aria-label="Recolher"><MdRemoveCircleOutline size={13} /></button>
                    <Node><ColumnIcon size={14} />telaPedido</Node>
                  </Branch>
                  <Leaves>
                    {leaves.map(([name, I]) => <Node key={name}><I size={14} />{name}</Node>)}
                  </Leaves>
                </Tree>
                <Handle $top={314} aria-label="Recolher propriedades"><MdChevronRight size={17} /></Handle>
              </Panel>

              <Panel $w={237} $last>
                <PanelHead>Screen1 Properties</PanelHead>
                <Section>Common properties</Section>
                <Form>
                  <Area rows={1} aria-label="About Screen" defaultValue="About Screen" />
                  <ColorField id="about-bg" label="About Screen Background Color" value="#444444FF" />
                  <Checks><Check><input type="checkbox" />About Screen Light Theme</Check></Checks>
                  <Field id="about-title" label="About Screen Title"><input id="about-title" defaultValue="About this application" /></Field>
                  <SelectField id="align-h" label="Align Horizontal" value="Left : 1" />
                  <SelectField id="align-v" label="Align Vertical" value="Top : 1" />
                  <ColorField id="bg" label="Background Color" value="#DEE484FF" />
                  <Field id="bg-image" label="Background Image" short>
                    <select id="bg-image" defaultValue="None"><option>None</option></select>
                    <MdExpandMore size={15} />
                    <FileTools>
                      <button type="button" aria-label="Enviar"><MdOutlineCloudUpload size={18} /></button>
                      <button type="button" aria-label="Abrir"><MdOpenInNew size={17} /></button>
                    </FileTools>
                  </Field>
                  <SelectField id="close-anim" label="Close Screen Animation" value="Default" />
                  <Checks>
                    <Check><input type="checkbox" />High Quality Images</Check>
                    <Check><input type="checkbox" />Keep Screen On</Check>
                  </Checks>
                  <ColorField id="nav-color" label="Navigation Bar Color" value="#000000FF" />
                  <SelectField id="open-anim" label="Open Screen Animation" value="Default" />
                </Form>
              </Panel>
            </Panels>
          </Creator>
        </Browser>
      </Workspace>
    </Desktop>
  );
}
